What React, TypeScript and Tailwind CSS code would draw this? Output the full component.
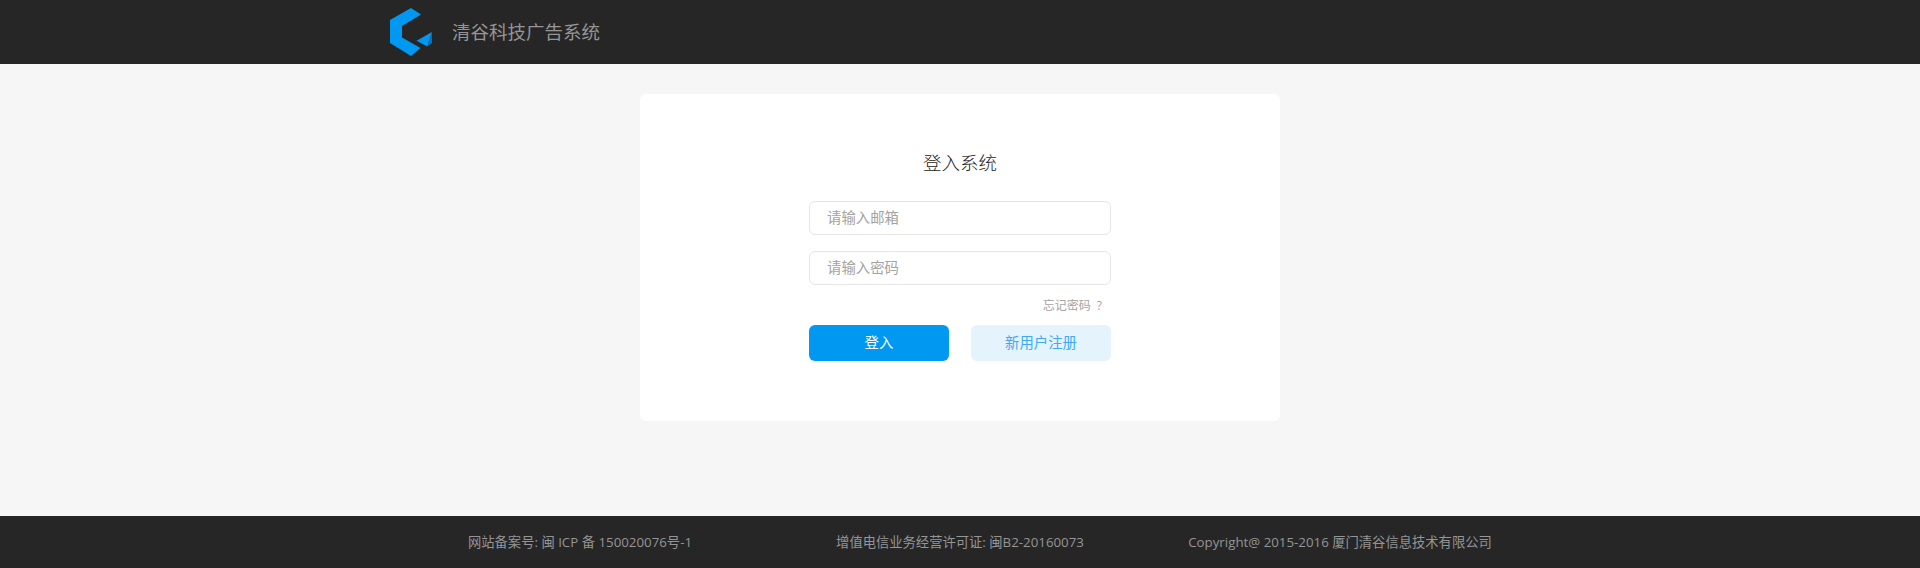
import React from 'react';

const FONT = 'font-["Open_Sans","Noto_Sans_CJK_SC",sans-serif]';

function Logo() {
  return (
    <svg width="42" height="48" viewBox="0 0 42 48" className="shrink-0">
      <polygon points="21,0 31,6.5 12,18 12,29.5 30.5,40 21,48 0,35 0,12" fill="#0098f0" />
      <polygon points="26.5,32.7 42,24 37.3,38.5" fill="#0098f0" />
      <polygon points="42,24 42,35.3 37.3,38.5" fill="#0a6fc0" />
    </svg>
  );
}

export default function App() {
  return (
    <div className={`${FONT} flex flex-col h-screen bg-[#f6f6f6]`}>
      {/* Header */}
      <header className="h-16 bg-[#262626] shrink-0">
        <div className="w-[1140px] h-full mx-auto flex items-center gap-5">
          <Logo />
          <span className="text-[18.5px] text-[#959595]">清谷科技广告系统</span>
        </div>
      </header>

      {/* Login card */}
      <main className="flex-1 flex justify-center items-start pt-[30px]">
        <div className="w-[640px] h-[327px] bg-white rounded-md flex flex-col items-center pt-[56px]">
          <h1 className="text-[18.5px] leading-[26px] font-light text-[#222] mb-[25px]">登入系统</h1>
          <form className="w-[302px] flex flex-col">
            <input
              type="text"
              placeholder="请输入邮箱"
              className="h-[34px] pl-[17px] pr-[18px] pb-0.5 text-[14.4px] text-[#444] placeholder:text-[#a3a3a3] border border-[#e6e6e6] rounded-md outline-none"
            />
            <input
              type="password"
              placeholder="请输入密码"
              className="h-[34px] mt-4 pl-[17px] pr-[18px] pb-0.5 text-[14.4px] text-[#444] placeholder:text-[#a3a3a3] border border-[#e6e6e6] rounded-md outline-none"
            />
            <div className="h-10 flex items-center justify-end pr-[9px] pt-0.5 text-xs text-[#a3a3a3] [word-spacing:3px]">忘记密码 ?</div>
            <div className="flex justify-between">
              <button type="button" className="w-[140px] h-9 rounded-md bg-[#0098f0] text-[14.4px] text-white">登入</button>
              <button type="button" className="w-[140px] h-9 rounded-md bg-[#e5f3fd] text-[14.4px] text-[#3fa9f5]">新用户注册</button>
            </div>
          </form>
        </div>
      </main>

      {/* Footer */}
      <footer className="h-[52px] pt-px bg-[#262626] shrink-0">
        <div className="w-[1140px] h-full mx-auto grid grid-cols-3 items-center text-center text-[13.3px] text-[#959595]">
          <span>网站备案号: 闽 ICP 备 150020076号-1</span>
          <span>增值电信业务经营许可证: 闽B2-20160073</span>
          <span>Copyright@ 2015-2016 厦门清谷信息技术有限公司</span>
        </div>
      </footer>
    </div>
  );
}
